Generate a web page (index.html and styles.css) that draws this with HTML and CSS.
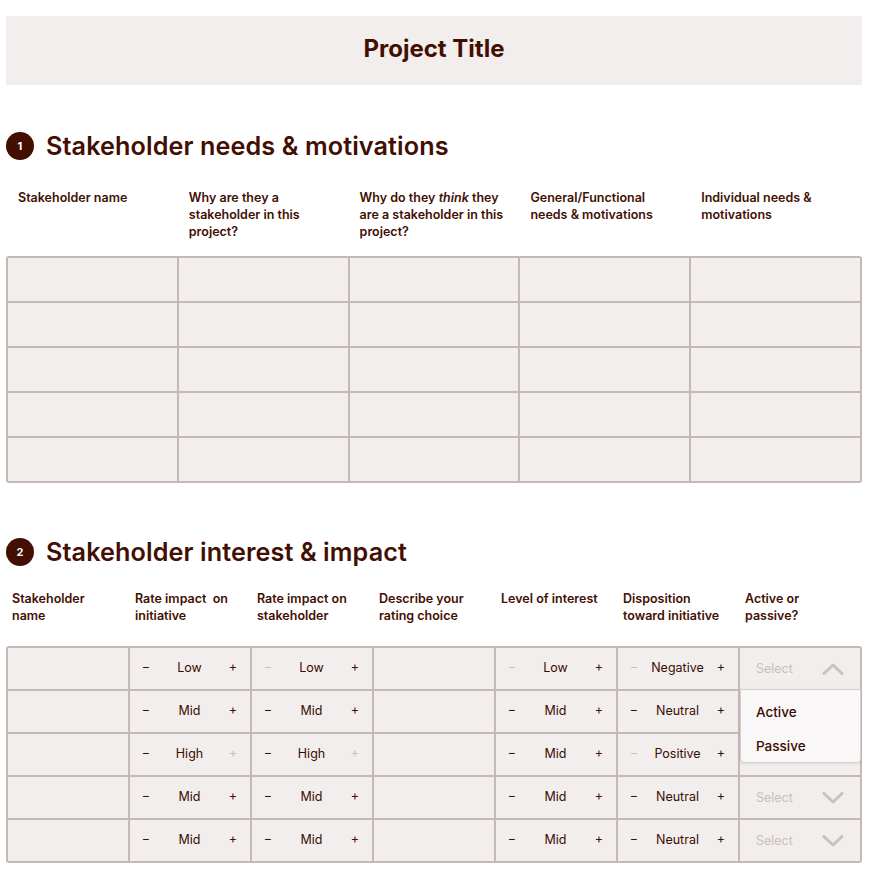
FILE: index.html
```html
<!DOCTYPE html>
<html lang="en">
<head>
<meta charset="utf-8">
<title>Project Title</title>
<link rel="stylesheet" href="styles.css">
</head>
<body>
<div class="page">
  <header class="title-bar"><h1>Project Title</h1></header>

  <section class="section s1">
    <h2 class="sec-head"><span class="num">1</span>Stakeholder needs &amp; motivations</h2>
    <div class="heads heads-5">
      <div>Stakeholder name</div>
      <div>Why are they a stakeholder in this project?</div>
      <div>Why do they <em>think</em> they are a stakeholder in this project?</div>
      <div>General/Functional needs &amp; motivations</div>
      <div>Individual needs &amp; motivations</div>
    </div>
    <div class="grid grid-5">
      <div class="cell"></div><div class="cell"></div><div class="cell"></div><div class="cell"></div><div class="cell"></div>
      <div class="cell"></div><div class="cell"></div><div class="cell"></div><div class="cell"></div><div class="cell"></div>
      <div class="cell"></div><div class="cell"></div><div class="cell"></div><div class="cell"></div><div class="cell"></div>
      <div class="cell"></div><div class="cell"></div><div class="cell"></div><div class="cell"></div><div class="cell"></div>
      <div class="cell"></div><div class="cell"></div><div class="cell"></div><div class="cell"></div><div class="cell"></div>
    </div>
  </section>

  <section class="section s2">
    <h2 class="sec-head"><span class="num">2</span>Stakeholder interest &amp; impact</h2>
    <div class="heads heads-7">
      <div>Stakeholder name</div>
      <div>Rate impact&nbsp; on initiative</div>
      <div>Rate impact on stakeholder</div>
      <div>Describe your rating choice</div>
      <div>Level of interest</div>
      <div>Disposition toward initiative</div>
      <div>Active or passive?</div>
    </div>
    <div class="grid grid-7">
      <!-- row 1 -->
      <div class="cell"></div>
      <div class="cell step"><span class="btn">−</span><span class="val">Low</span><span class="btn">+</span></div>
      <div class="cell step"><span class="btn off">−</span><span class="val">Low</span><span class="btn">+</span></div>
      <div class="cell"></div>
      <div class="cell step"><span class="btn off">−</span><span class="val">Low</span><span class="btn">+</span></div>
      <div class="cell step"><span class="btn off">−</span><span class="val">Negative</span><span class="btn">+</span></div>
      <div class="cell select open">
        <span class="ph">Select</span>
        <svg class="chev" width="22" height="12" viewBox="0 0 22 12"><path d="M2 10.5 L11 2 L20 10.5" fill="none" stroke="currentColor" stroke-width="3" stroke-linecap="round" stroke-linejoin="round"/></svg>
        <div class="menu">
          <div class="opt">Active</div>
          <div class="opt">Passive</div>
        </div>
      </div>
      <!-- row 2 -->
      <div class="cell"></div>
      <div class="cell step"><span class="btn">−</span><span class="val">Mid</span><span class="btn">+</span></div>
      <div class="cell step"><span class="btn">−</span><span class="val">Mid</span><span class="btn">+</span></div>
      <div class="cell"></div>
      <div class="cell step"><span class="btn">−</span><span class="val">Mid</span><span class="btn">+</span></div>
      <div class="cell step"><span class="btn">−</span><span class="val">Neutral</span><span class="btn">+</span></div>
      <div class="cell select"></div>
      <!-- row 3 -->
      <div class="cell"></div>
      <div class="cell step"><span class="btn">−</span><span class="val">High</span><span class="btn off">+</span></div>
      <div class="cell step"><span class="btn">−</span><span class="val">High</span><span class="btn off">+</span></div>
      <div class="cell"></div>
      <div class="cell step"><span class="btn">−</span><span class="val">Mid</span><span class="btn">+</span></div>
      <div class="cell step"><span class="btn off">−</span><span class="val">Positive</span><span class="btn">+</span></div>
      <div class="cell select"></div>
      <!-- row 4 -->
      <div class="cell"></div>
      <div class="cell step"><span class="btn">−</span><span class="val">Mid</span><span class="btn">+</span></div>
      <div class="cell step"><span class="btn">−</span><span class="val">Mid</span><span class="btn">+</span></div>
      <div class="cell"></div>
      <div class="cell step"><span class="btn">−</span><span class="val">Mid</span><span class="btn">+</span></div>
      <div class="cell step"><span class="btn">−</span><span class="val">Neutral</span><span class="btn">+</span></div>
      <div class="cell select">
        <span class="ph">Select</span>
        <svg class="chev" width="22" height="12" viewBox="0 0 22 12"><path d="M2 1.5 L11 10 L20 1.5" fill="none" stroke="currentColor" stroke-width="3" stroke-linecap="round" stroke-linejoin="round"/></svg>
      </div>
      <!-- row 5 -->
      <div class="cell"></div>
      <div class="cell step"><span class="btn">−</span><span class="val">Mid</span><span class="btn">+</span></div>
      <div class="cell step"><span class="btn">−</span><span class="val">Mid</span><span class="btn">+</span></div>
      <div class="cell"></div>
      <div class="cell step"><span class="btn">−</span><span class="val">Mid</span><span class="btn">+</span></div>
      <div class="cell step"><span class="btn">−</span><span class="val">Neutral</span><span class="btn">+</span></div>
      <div class="cell select">
        <span class="ph">Select</span>
        <svg class="chev" width="22" height="12" viewBox="0 0 22 12"><path d="M2 1.5 L11 10 L20 1.5" fill="none" stroke="currentColor" stroke-width="3" stroke-linecap="round" stroke-linejoin="round"/></svg>
      </div>
    </div>
  </section>
</div>
</body>
</html>
```

FILE: styles.css
```css
* { box-sizing: border-box; }
html, body { margin: 0; padding: 0; background: #ffffff; }
body {
  font-family: "Inter", "Noto Sans", sans-serif;
  color: #420f02;
}
.page {
  width: 856px;
  margin-left: 6px;
  padding-top: 16px;
}
.title-bar {
  height: 69px;
  background: #f2eeed;
  display: flex;
  align-items: center;
  justify-content: center;
  padding-bottom: 5px;
}
.title-bar h1 {
  margin: 0;
  font-size: 24px;
  font-weight: 700;
  letter-spacing: 0;
  color: #420f02;
}
.sec-head {
  display: flex;
  align-items: center;
  gap: 12px;
  margin: 0;
  height: 28px;
  font-size: 25.2px;
  font-weight: 600;
  letter-spacing: 0.1px;
  color: #420f02;
}
.num {
  width: 28px;
  height: 28px;
  border-radius: 50%;
  background: #420f02;
  color: #ffffff;
  font-size: 11px;
  font-weight: 700;
  display: flex;
  align-items: center;
  justify-content: center;
  flex: none;
}
.s1 { margin-top: 47px; }
.s2 { margin-top: 55px; }
.heads {
  display: grid;
  font-size: 12.5px;
  font-weight: 600;
  line-height: 17px;
  color: #420f02;
}
.heads em { font-style: italic; }
.heads-5 {
  grid-template-columns: repeat(5, 1fr);
  margin: 28px 0 0;
  height: 68px;
  padding: 0 2px;
  column-gap: 2px;
}
.heads-5 > div { padding: 1px 10px 0 10px; }
.heads-7 {
  grid-template-columns: repeat(7, 1fr);
  margin: 23px 0 0;
  height: 57px;
  padding: 0 2px;
  column-gap: 2px;
}
.heads-7 > div { padding: 1px 12px 0 4px; }
.heads-7 > div:nth-child(n+2) { padding-left: 5px; padding-right: 6px; }

.grid {
  display: grid;
  gap: 2px;
  padding: 2px;
  background: #c6b8b4;
  border-radius: 3px;
}
.grid-5 {
  grid-template-columns: repeat(5, 1fr);
  grid-auto-rows: 43px;
}
.grid-7 {
  grid-template-columns: repeat(7, 1fr);
  grid-auto-rows: 41px;
}
.cell {
  background: #f2eeed;
  position: relative;
}
.step {
  display: flex;
  align-items: center;
  justify-content: space-between;
  padding: 0 12px 0 11px;
  font-size: 12.5px;
  line-height: 16px;
  color: #3a0c02;
}
.btn {
  width: 10px;
  text-align: center;
  font-size: 12.5px;
  line-height: 16px;
  padding-bottom: 3px;
  color: #420f02;
}
.btn.off { color: #cdbfbb; }
.val { flex: 1; text-align: center; padding-bottom: 2px; }

.select {
  display: flex;
  align-items: center;
  justify-content: space-between;
  padding: 0 16px 0 16px;
}
.ph {
  font-size: 12.5px;
  color: #cbbfbb;
  padding-bottom: 1px;
}
.chev { color: #cdc1bd; display: block; }
.open { z-index: 2; }
.menu {
  position: absolute;
  left: 0;
  top: 41px;
  width: 121px;
  height: 74px;
  background: #f9f7f7;
  border: 1px solid #d9d0cd;
  border-radius: 0 0 4px 4px;
  box-shadow: 0 1px 3px rgba(80, 40, 30, 0.12);
  padding-top: 5px;
}
.opt {
  font-size: 13.5px;
  line-height: 34px;
  height: 34px;
  padding-left: 15px;
  color: #3a0c02;
  font-weight: 500;
}
```
